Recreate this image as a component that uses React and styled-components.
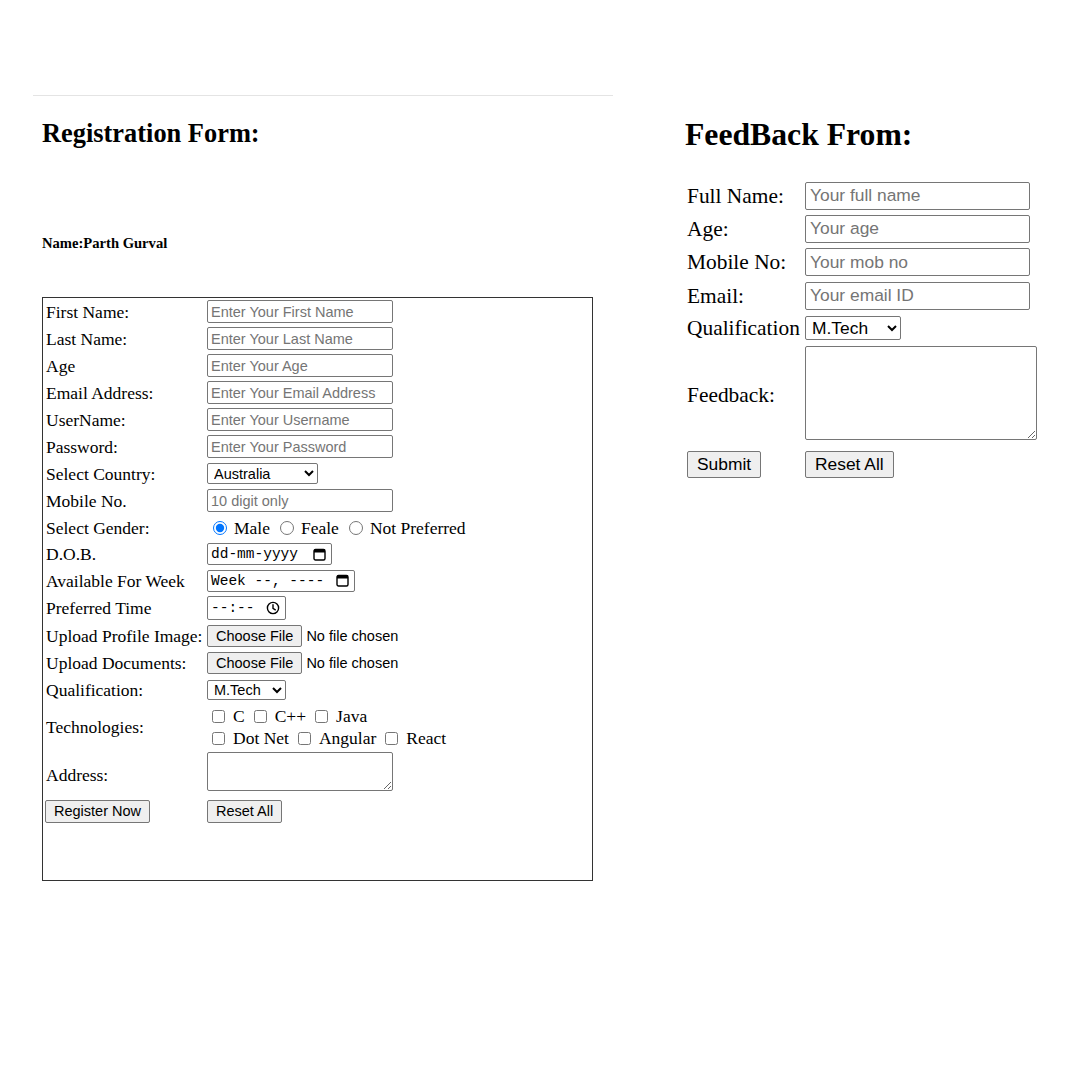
import React from "react";
import styled, { createGlobalStyle } from "styled-components";

const GlobalStyle = createGlobalStyle`
  html, body {
    margin: 0;
    padding: 0;
    background: #fff;
  }
  body {
    font-family: "Liberation Serif", "Times New Roman", serif;
    color: #000;
  }
`;

const Page = styled.div`
  display: flex;
  align-items: flex-start;
  width: 1080px;
  min-height: 1080px;
`;

const RegisterPane = styled.section`
  width: 580px;
  margin-left: 33px;
  padding-top: 95px;
`;

const Rule = styled.hr`
  margin: 0;
  border: 0;
  border-top: 1px solid #e4e4e4;
`;

const Title = styled.h2`
  margin: 22px 0 0 9px;
  font-size: 26.4px;
  line-height: 30px;
  font-weight: bold;
`;

const Author = styled.h5`
  margin: 87px 0 0 9px;
  font-size: 14.6px;
  line-height: 17px;
  font-weight: bold;
`;

const FormBox = styled.form`
  box-sizing: border-box;
  margin: 45px 0 0 9px;
  width: 551px;
  height: 584px;
  border: 1px solid #333;
  padding: 0 0 0 3px;
`;

const Row = styled.div`
  display: grid;
  grid-template-columns: ${(p) => p.$label}px 1fr;
  align-items: center;
  height: ${(p) => p.$h}px;
`;

const Label = styled.label`
  font-size: ${(p) => (p.$large ? "21.4px" : "17.5px")};
  line-height: ${(p) => (p.$large ? "24px" : "20px")};
  white-space: nowrap;
  padding-top: ${(p) => p.$shift || 0}px;
`;

const TextInput = styled.input`
  box-sizing: border-box;
  width: ${(p) => (p.$large ? 225 : 186)}px;
  height: ${(p) => (p.$large ? 28 : 23)}px;
  border: 1px solid #767676;
  border-radius: 2px;
  padding: 0 ${(p) => (p.$large ? 4 : 3)}px;
  font-family: "Liberation Sans", Arial, sans-serif;
  font-size: ${(p) => (p.$large ? "17.4px" : "14.5px")};
  color: #000;
  background: #fff;
  &::placeholder {
    color: #757575;
  }
`;

const Select = styled.select`
  box-sizing: border-box;
  width: ${(p) => p.$w}px;
  height: ${(p) => p.$h}px;
  border: 1px solid #767676;
  border-radius: 2px;
  padding: 0 0 0 2px;
  font-family: "Liberation Sans", Arial, sans-serif;
  font-size: ${(p) => (p.$large ? "17.4px" : "14.5px")};
  color: #000;
  background: #fff;
`;

const TextArea = styled.textarea`
  box-sizing: border-box;
  width: ${(p) => p.$w}px;
  height: ${(p) => p.$h}px;
  border: 1px solid #767676;
  border-radius: 2px;
  margin: ${(p) => p.$top || 0}px 0 0 0;
  align-self: ${(p) => (p.$top ? "start" : "center")};
  font-family: "Liberation Mono", monospace;
  font-size: 14px;
`;

const Button = styled.button`
  box-sizing: border-box;
  height: ${(p) => (p.$large ? 27 : 23)}px;
  padding: 0 ${(p) => (p.$large ? 9 : 8)}px;
  border: 1px solid #767676;
  border-radius: 2px;
  background: #efefef;
  color: #000;
  font-family: "Liberation Sans", Arial, sans-serif;
  font-size: ${(p) => (p.$large ? "17.4px" : "14.5px")};
  justify-self: start;
  margin-left: ${(p) => p.$shift || 0}px;
`;

const FieldBox = styled.div`
  box-sizing: border-box;
  display: inline-flex;
  align-items: center;
  justify-content: space-between;
  width: ${(p) => p.$w}px;
  height: ${(p) => p.$h}px;
  padding: 0 5px 0 3px;
  border: 1px solid #767676;
  border-radius: 2px;
  font-family: "Liberation Mono", "DejaVu Sans Mono", monospace;
  font-size: 14.5px;
  color: #000;
  white-space: pre;
  justify-self: start;
`;

const FileRow = styled.div`
  display: flex;
  align-items: center;
  gap: 4px;
  font-family: "Liberation Sans", Arial, sans-serif;
  font-size: 14.5px;
`;

const FileButton = styled.span`
  box-sizing: border-box;
  display: inline-flex;
  align-items: center;
  height: 22px;
  padding: 0 8px;
  border: 1px solid #767676;
  border-radius: 2px;
  background: #efefef;
`;

const Choices = styled.div`
  display: flex;
  align-items: center;
  height: ${(p) => p.$h || 22}px;
`;

const Choice = styled.label`
  display: inline-flex;
  align-items: center;
  font-size: 17.5px;
  line-height: 20px;
  margin-right: 4px;
`;

const Radio = styled.input`
  width: 14px;
  height: 14px;
  margin: 0 7px 0 6px;
  accent-color: #0075ff;
`;

const Check = styled.input`
  width: 13px;
  height: 13px;
  margin: 0 8px 0 5px;
`;

const FeedbackPane = styled.section`
  margin-left: 72px;
  padding-top: 117px;
`;

const FeedbackTitle = styled.h1`
  margin: 0;
  font-size: 31.7px;
  line-height: 36px;
  font-weight: bold;
`;

const FeedbackForm = styled.form`
  margin-top: 26px;
  padding-left: 2px;
`;

const CalendarIcon = () => (
  <svg width="13" height="13" viewBox="0 0 13 13">
    <rect x="1" y="1.5" width="11" height="10.5" rx="1.5" fill="none" stroke="#000" strokeWidth="1.4" />
    <rect x="1" y="1.5" width="11" height="3" fill="#000" />
  </svg>
);

const ClockIcon = () => (
  <svg width="14" height="14" viewBox="0 0 14 14">
    <circle cx="7" cy="7" r="5.6" fill="none" stroke="#000" strokeWidth="1.4" />
    <path d="M7 3.8V7.3L9.3 8.8" fill="none" stroke="#000" strokeWidth="1.4" strokeLinecap="round" />
  </svg>
);

const textFields = [
  ["First Name:", "Enter Your First Name"],
  ["Last Name:", "Enter Your Last Name"],
  ["Age", "Enter Your Age"],
  ["Email Address:", "Enter Your Email Address"],
  ["UserName:", "Enter Your Username"],
  ["Password:", "Enter Your Password"],
];

const feedbackFields = [
  ["Full Name:", "Your full name", 33],
  ["Age:", "Your age", 33],
  ["Mobile No:", "Your mob no", 34],
  ["Email:", "Your email ID", 33],
];

export default function App() {
  return (
    <Page>
      <GlobalStyle />
      <RegisterPane>
        <Rule />
        <Title>Registration Form:</Title>
        <Author>Name:Parth Gurval</Author>
        <FormBox onSubmit={(e) => e.preventDefault()}>
          {textFields.map(([label, hint]) => (
            <Row key={label} $label={161} $h={27}>
              <Label>{label}</Label>
              <TextInput
                type={label === "Password:" ? "password" : "text"}
                placeholder={hint}
              />
            </Row>
          ))}
          <Row $label={161} $h={27}>
            <Label>Select Country:</Label>
            <Select $w={111} $h={21} defaultValue="Australia">
              <option>Australia</option>
              <option>India</option>
              <option>Canada</option>
              <option>USA</option>
            </Select>
          </Row>
          <Row $label={161} $h={27}>
            <Label>Mobile No.</Label>
            <TextInput type="tel" placeholder="10 digit only" />
          </Row>
          <Row $label={161} $h={27}>
            <Label>Select Gender:</Label>
            <Choices>
              <Choice>
                <Radio type="radio" name="gender" defaultChecked />Male
              </Choice>
              <Choice>
                <Radio type="radio" name="gender" />Feale
              </Choice>
              <Choice>
                <Radio type="radio" name="gender" />Not Preferred
              </Choice>
            </Choices>
          </Row>
          <Row $label={161} $h={26}>
            <Label>D.O.B.</Label>
            <FieldBox $w={125} $h={22}>
              dd-mm-yyyy
              <CalendarIcon />
            </FieldBox>
          </Row>
          <Row $label={161} $h={27}>
            <Label>Available For Week</Label>
            <FieldBox $w={148} $h={22}>
              Week --, ----
              <CalendarIcon />
            </FieldBox>
          </Row>
          <Row $label={161} $h={28}>
            <Label>Preferred Time</Label>
            <FieldBox $w={79} $h={24}>
              --:--
              <ClockIcon />
            </FieldBox>
          </Row>
          <Row $label={161} $h={27}>
            <Label>Upload Profile Image:</Label>
            <FileRow>
              <FileButton>Choose File</FileButton>
              No file chosen
            </FileRow>
          </Row>
          <Row $label={161} $h={27}>
            <Label>Upload Documents:</Label>
            <FileRow>
              <FileButton>Choose File</FileButton>
              No file chosen
            </FileRow>
          </Row>
          <Row $label={161} $h={27}>
            <Label>Qualification:</Label>
            <Select $w={79} $h={20} defaultValue="M.Tech">
              <option>M.Tech</option>
              <option>B.Tech</option>
              <option>MCA</option>
            </Select>
          </Row>
          <Row $label={161} $h={48}>
            <Label>Technologies:</Label>
            <div>
              <Choices>
                <Choice><Check type="checkbox" />C</Choice>
                <Choice><Check type="checkbox" />C++</Choice>
                <Choice><Check type="checkbox" />Java</Choice>
              </Choices>
              <Choices>
                <Choice><Check type="checkbox" />Dot Net</Choice>
                <Choice><Check type="checkbox" />Angular</Choice>
                <Choice><Check type="checkbox" />React</Choice>
              </Choices>
            </div>
          </Row>
          <Row $label={161} $h={44}>
            <Label $shift={3}>Address:</Label>
            <TextArea $w={186} $h={39} $top={1} />
          </Row>
          <Row $label={161} $h={32}>
            <Button type="submit" $shift={-1}>Register Now</Button>
            <Button type="reset">Reset All</Button>
          </Row>
        </FormBox>
      </RegisterPane>

      <FeedbackPane>
        <FeedbackTitle>FeedBack From:</FeedbackTitle>
        <FeedbackForm onSubmit={(e) => e.preventDefault()}>
          {feedbackFields.map(([label, hint, h]) => (
            <Row key={label} $label={118} $h={h}>
              <Label $large>{label}</Label>
              <TextInput $large placeholder={hint} />
            </Row>
          ))}
          <Row $label={118} $h={32}>
            <Label $large>Qualification</Label>
            <Select $large $w={96} $h={24} defaultValue="M.Tech">
              <option>M.Tech</option>
              <option>B.Tech</option>
              <option>MCA</option>
            </Select>
          </Row>
          <Row $label={118} $h={98}>
            <Label $large $shift={4}>Feedback:</Label>
            <TextArea $w={232} $h={94} />
          </Row>
          <Row $label={118} $h={45}>
            <Button type="submit" $large>Submit</Button>
            <Button type="reset" $large>Reset All</Button>
          </Row>
        </FeedbackForm>
      </FeedbackPane>
    </Page>
  );
}
